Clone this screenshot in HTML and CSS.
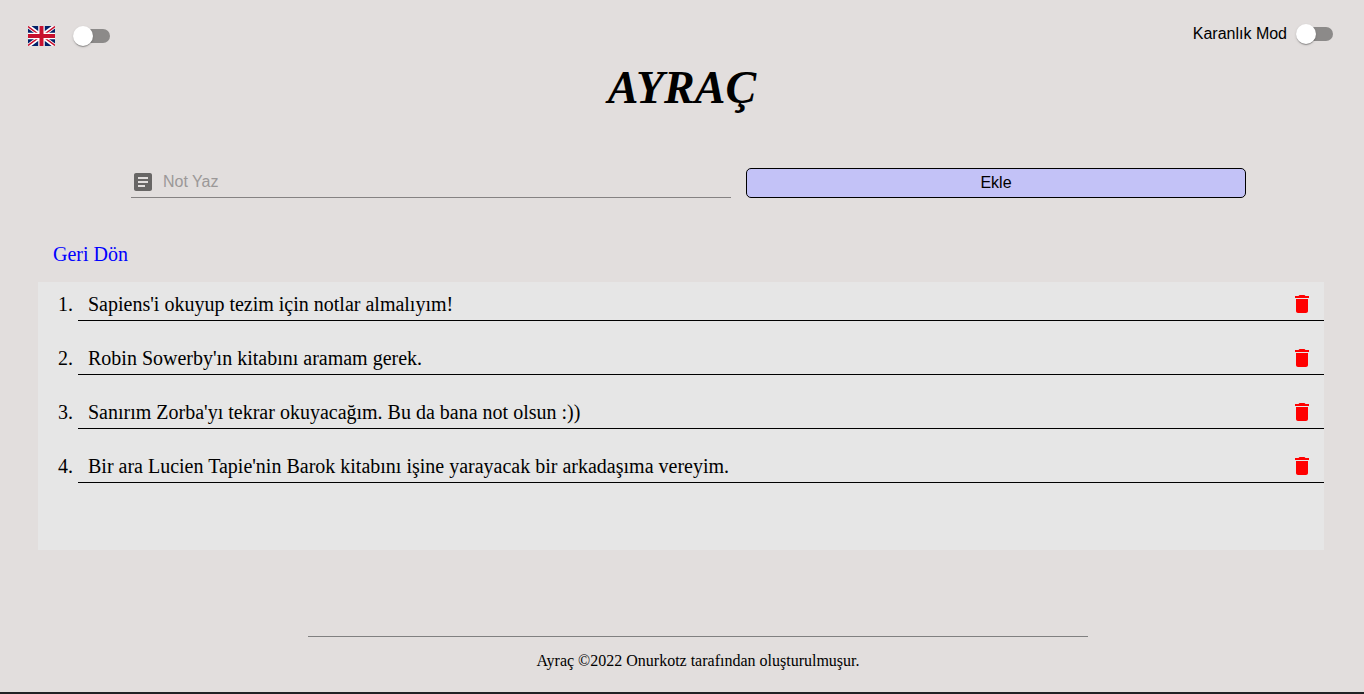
FILE: index.html
```html
<!DOCTYPE html>
<html lang="tr">
<head>
<meta charset="utf-8">
<meta name="viewport" content="width=device-width, initial-scale=1">
<title>Ayraç</title>
<link rel="stylesheet" href="styles.css">
</head>
<body class="page">
<svg class="sprite" aria-hidden="true">
  <symbol id="trash" viewBox="0 0 24 24"><path d="M6 19c0 1.100.9 2 2 2h8c1.100 0 2-.9 2-2V7H6v12zM19 4h-3.500l-1-1h-5l-1 1H5v2h14V4z"/></symbol>
</svg>
<header class="topbar">
  <div class="language">
    <svg class="flag" viewBox="0 0 54 40" role="img" aria-label="English">
      <path fill="#012169" d="M0 0h54v40H0z"/>
      <path stroke="#fff" stroke-width="8" d="M0 0l54 40M54 0L0 40"/>
      <path stroke="#c8102e" stroke-width="3" d="M0 1l27 20M27 19l27 20M54 1L27 21M27 19L0 39"/>
      <path stroke="#fff" stroke-width="13" d="M27 0v40M0 20h54"/>
      <path stroke="#c8102e" stroke-width="8" d="M27 0v40M0 20h54"/>
    </svg>
    <input class="switch" type="checkbox" role="switch" aria-label="English">
  </div>
  <label class="theme">Karanlık Mod
    <input class="switch" type="checkbox" role="switch">
  </label>
</header>
<main class="content">
  <h1 class="title">AYRAÇ</h1>
  <form class="note-form">
    <label class="field" aria-label="Not Yaz">
      <svg class="icon" viewBox="0 0 24 24" aria-hidden="true"><path d="M19 3H5c-1.100 0-2 .9-2 2v14c0 1.100.9 2 2 2h14c1.100 0 2-.9 2-2V5c0-1.100-.9-2-2-2zm-5 14H7v-2h7v2zm3-4H7v-2h10v2zm0-4H7V7h10v2z"/></svg>
      <input class="field-input" type="text" placeholder="Not Yaz">
    </label>
    <button class="add" type="button">Ekle</button>
  </form>
  <a class="back" href="#">Geri Dön</a>
  <ol class="notes">
    <li class="note"><div class="note-row"><span>Sapiens'i okuyup tezim için notlar almalıyım!</span><button class="delete" type="button" aria-label="Sil"><svg class="icon"><use href="#trash"/></svg></button></div></li>
    <li class="note"><div class="note-row"><span>Robin Sowerby'ın kitabını aramam gerek.</span><button class="delete" type="button" aria-label="Sil"><svg class="icon"><use href="#trash"/></svg></button></div></li>
    <li class="note"><div class="note-row"><span>Sanırım Zorba'yı tekrar okuyacağım. Bu da bana not olsun :))</span><button class="delete" type="button" aria-label="Sil"><svg class="icon"><use href="#trash"/></svg></button></div></li>
    <li class="note"><div class="note-row"><span>Bir ara Lucien Tapie'nin Barok kitabını işine yarayacak bir arkadaşıma vereyim.</span><button class="delete" type="button" aria-label="Sil"><svg class="icon"><use href="#trash"/></svg></button></div></li>
  </ol>
</main>
<footer class="footer">Ayraç ©2022 Onurkotz tarafından oluşturulmuşur.</footer>
</body>
</html>
```
FILE: styles.css
```css
* { box-sizing: border-box; }

.page {
  display: flex;
  flex-direction: column;
  min-height: 100vh;
  margin: 0;
  border-bottom: 2px solid #212225;
  background: #e2dedd;
  color: #000;
  font-family: "Liberation Serif", "Times New Roman", serif;
}

.sprite { display: none; }

.topbar {
  display: flex;
  justify-content: space-between;
  align-items: flex-start;
  padding: 24px 31px 0 28px;
}

.language {
  display: flex;
  align-items: center;
  gap: 18px;
  padding-top: 2px;
}

.flag { width: 27px; height: 20px; }

.theme {
  display: flex;
  align-items: center;
  gap: 9px;
  font: 16px/20px "Liberation Sans", Arial, sans-serif;
}

.switch {
  appearance: none;
  display: grid;
  grid-template-columns: 37px;
  align-items: center;
  width: 37px;
  height: 20px;
  margin: 0;
  cursor: pointer;
}

.switch::before,
.switch::after {
  content: "";
  grid-area: 1 / 1;
}

.switch::before {
  justify-self: end;
  width: 34px;
  height: 14px;
  border-radius: 7px;
  background: #8c8a89;
}

.switch::after {
  width: 20px;
  height: 20px;
  border-radius: 50%;
  background: #fff;
  box-shadow: 0 2px 1px -1px rgba(0, 0, 0, .2), 0 1px 1px rgba(0, 0, 0, .14), 0 1px 3px rgba(0, 0, 0, .12);
}

.switch:checked::after { justify-self: end; }

.title {
  margin: 12px 0 0;
  text-align: center;
  font-size: 46px;
  font-style: italic;
  font-weight: 700;
  line-height: 60px;
}

.note-form {
  display: grid;
  grid-template-columns: 6fr 5fr;
  gap: 15px;
  margin: 50px 118px 0 131px;
}

.field {
  display: flex;
  align-items: center;
  gap: 8px;
  height: 30px;
  padding-bottom: 1px;
  border-bottom: 1px solid #858282;
}

.icon {
  display: block;
  flex: none;
  width: 24px;
  height: 24px;
  fill: currentColor;
}

.field .icon { color: #686665; }

.field-input {
  flex: 1;
  min-width: 0;
  padding: 0;
  border: 0;
  outline: 0;
  background: none;
  font: 16px/24px "Liberation Sans", Arial, sans-serif;
}

.field-input::placeholder { color: #9b9898; opacity: 1; }

.add {
  height: 30px;
  padding: 0;
  border: 1px solid #000;
  border-radius: 5px;
  background: #c3c2f7;
  color: #000;
  font: 16px/24px "Liberation Sans", Arial, sans-serif;
}

.back {
  display: inline-block;
  margin: 44px 0 0 53px;
  color: #00f;
  font-size: 20px;
  line-height: 24px;
  text-decoration: none;
}

.notes {
  min-height: 268px;
  margin: 16px 40px 0 38px;
  padding: 0 0 0 40px;
  background: #e6e6e6;
  font-size: 20px;
  line-height: 24px;
}

.note {
  margin-bottom: 15px;
  border-bottom: 1px solid #000;
}

.note-row {
  display: flex;
  justify-content: space-between;
  align-items: center;
  padding: 10px 10px 4px;
}

.delete {
  padding: 0;
  border: 0;
  background: none;
  color: #f00;
  cursor: pointer;
}

.footer {
  margin: auto 276px 21px 308px;
  padding-top: 14px;
  border-top: 1px solid #808080;
  text-align: center;
  font-size: 16px;
  line-height: 20px;
}
```
